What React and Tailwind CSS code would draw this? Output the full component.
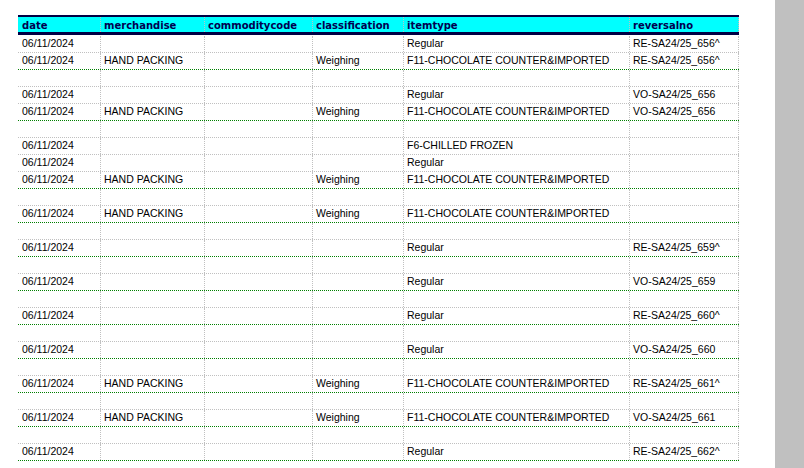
import React from "react";

const D = "06/11/2024";
const HP = "HAND PACKING";
const F11 = "F11-CHOCOLATE COUNTER&IMPORTED";

const rows = [
  [D, "", "", "", "Regular", "RE-SA24/25_656^", "g"],
  [D, HP, "", "Weighing", F11, "RE-SA24/25_656^", "G"],
  ["", "", "", "", "", "", "g"],
  [D, "", "", "", "Regular", "VO-SA24/25_656", "g"],
  [D, HP, "", "Weighing", F11, "VO-SA24/25_656", "G"],
  ["", "", "", "", "", "", "g"],
  [D, "", "", "", "F6-CHILLED FROZEN", "", "g"],
  [D, "", "", "", "Regular", "", "g"],
  [D, HP, "", "Weighing", F11, "", "G"],
  ["", "", "", "", "", "", "g"],
  [D, HP, "", "Weighing", F11, "", "G"],
  ["", "", "", "", "", "", "g"],
  [D, "", "", "", "Regular", "RE-SA24/25_659^", "G"],
  ["", "", "", "", "", "", "g"],
  [D, "", "", "", "Regular", "VO-SA24/25_659", "G"],
  ["", "", "", "", "", "", "g"],
  [D, "", "", "", "Regular", "RE-SA24/25_660^", "G"],
  ["", "", "", "", "", "", "g"],
  [D, "", "", "", "Regular", "VO-SA24/25_660", "G"],
  ["", "", "", "", "", "", "g"],
  [D, HP, "", "Weighing", F11, "RE-SA24/25_661^", "G"],
  ["", "", "", "", "", "", "g"],
  [D, HP, "", "Weighing", F11, "VO-SA24/25_661", "G"],
  ["", "", "", "", "", "", "g"],
  [D, "", "", "", "Regular", "RE-SA24/25_662^", "G"],
];

const widths = ["w-[83px]", "w-[104px]", "w-[108px]", "w-[91px]", "w-[226px]", "w-[109px]"];
const pads = ["pl-[4px]", "pl-[3px]", "pl-[3px]", "pl-[3px]", "pl-[3px]", "pl-[3px]"];
const headers = ["date", "merchandise", "commoditycode", "classification", "itemtype", "reversalno"];

export default function App() {
  return (
    <div className="flex h-[468px] w-[804px] bg-white overflow-hidden">
      <div className="flex-1 pl-[18px] pt-[15px]">
        <div className="w-[721px]">
          <div
            className="flex h-[20px] border-t-2 border-b-[3px] border-[#000044] bg-[#00ffff] text-[10px] font-bold text-[#000050]"
            style={{ fontFamily: '"DejaVu Sans", Verdana, sans-serif' }}
          >
            {headers.map((h, i) => (
              <div
                key={i}
                className={`${widths[i]} ${pads[i]} flex shrink-0 items-center border-r border-dotted border-[#c0c0c0] pt-[1px]`}
              >
                {h}
              </div>
            ))}
          </div>
          <div
            className="text-[10.5px] text-black"
            style={{ fontFamily: '"Liberation Sans", Arial, sans-serif' }}
          >
            {rows.map((r, ri) => (
              <div
                key={ri}
                className={`flex ${ri === 0 ? "h-[18px] pt-[1px]" : "h-[17px]"} border-b border-dotted ${
                  r[6] === "G" ? "border-[#008000]" : "border-[#c0c0c0]"
                }`}
              >
                {r.slice(0, 6).map((c, ci) => (
                  <div
                    key={ci}
                    className={`${widths[ci]} ${pads[ci]} flex shrink-0 items-center whitespace-nowrap leading-none pb-[1px] border-r border-dotted border-[#c0c0c0]`}
                  >
                    {c}
                  </div>
                ))}
              </div>
            ))}
          </div>
        </div>
      </div>
      <div className="w-[29px] shrink-0 bg-[#c0c0c0]" />
    </div>
  );
}
